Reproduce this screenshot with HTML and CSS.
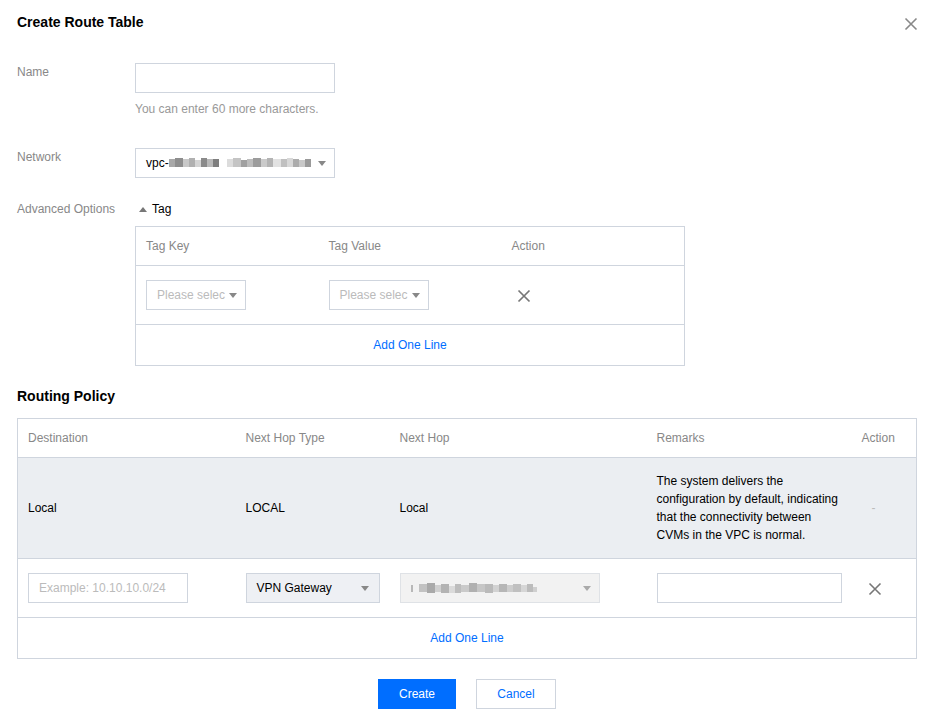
FILE: index.html
```html
<!DOCTYPE html>
<html>
<head>
<meta charset="utf-8">
<title>Create Route Table</title>
<link rel="stylesheet" href="styles.css">
</head>
<body>
<div class="dialog">
  <div class="dlg-head">
    <h3 class="dlg-title">Create Route Table</h3>
    <button class="close" aria-label="Close">
      <svg width="14" height="14" viewBox="0 0 14 14"><path d="M1.5 1.5 L12.5 12.5 M12.5 1.5 L1.5 12.5" stroke="#888" stroke-width="1.6" fill="none"/></svg>
    </button>
  </div>

  <div class="form">
    <div class="form-row">
      <div class="label">Name</div>
      <div class="control">
        <input class="input w200" type="text">
        <div class="help">You can enter 60 more characters.</div>
      </div>
    </div>

    <div class="form-row r-network">
      <div class="label">Network</div>
      <div class="control">
        <div class="select w200">
          <span class="sel-text">vpc-</span>
          <svg class="blur" width="148" height="12" viewBox="0 0 148 12">
            <rect x="0" y="2" width="6" height="8" fill="#a8a8a8"/>
            <rect x="6" y="1" width="8" height="9" fill="#8e8e8e"/>
            <rect x="14" y="2" width="6" height="8" fill="#c8c8c8"/>
            <rect x="20" y="1" width="6" height="9" fill="#b0b0b0"/>
            <rect x="26" y="3" width="6" height="7" fill="#d4d4d4"/>
            <rect x="32" y="1" width="6" height="9" fill="#8a8a8a"/>
            <rect x="38" y="2" width="6" height="8" fill="#b8b8b8"/>
            <rect x="44" y="2" width="6" height="8" fill="#7e7e7e"/>
            <rect x="58" y="2" width="6" height="8" fill="#dcdcdc"/>
            <rect x="64" y="1" width="8" height="9" fill="#c4c4c4"/>
            <rect x="72" y="3" width="6" height="7" fill="#a0a0a0"/>
            <rect x="78" y="2" width="6" height="8" fill="#bcbcbc"/>
            <rect x="84" y="1" width="8" height="9" fill="#9c9c9c"/>
            <rect x="92" y="2" width="6" height="8" fill="#cacaca"/>
            <rect x="98" y="1" width="6" height="9" fill="#b4b4b4"/>
            <rect x="104" y="2" width="8" height="8" fill="#e2e2e2"/>
            <rect x="112" y="2" width="6" height="8" fill="#c0c0c0"/>
            <rect x="118" y="1" width="6" height="9" fill="#d8d8d8"/>
            <rect x="124" y="2" width="6" height="8" fill="#acacac"/>
            <rect x="130" y="3" width="6" height="7" fill="#c8c8c8"/>
            <rect x="136" y="2" width="6" height="8" fill="#9a9a9a"/>
          </svg>
          <span class="caret"></span>
        </div>
      </div>
    </div>

    <div class="form-row r-adv">
      <div class="label">Advanced Options</div>
      <div class="control">
        <div class="toggle"><span class="tri-up"></span><span class="toggle-text">Tag</span></div>
        <table class="tbl tag-tbl">
          <colgroup><col class="c3"><col class="c3"><col></colgroup>
          <thead>
            <tr><th>Tag Key</th><th>Tag Value</th><th>Action</th></tr>
          </thead>
          <tbody>
            <tr class="row-input">
              <td><div class="select w100"><span class="placeholder">Please selec</span><span class="caret"></span></div></td>
              <td><div class="select w100"><span class="placeholder">Please selec</span><span class="caret"></span></div></td>
              <td><span class="del-x tag-del"><svg width="14" height="14" viewBox="0 0 14 14"><path d="M1.5 1.5 L12.5 12.5 M12.5 1.5 L1.5 12.5" stroke="#777" stroke-width="1.7" fill="none"/></svg></span></td>
            </tr>
            <tr class="row-add"><td colspan="3"><a class="link" href="#">Add One Line</a></td></tr>
          </tbody>
        </table>
      </div>
    </div>
  </div>

  <h4 class="section-title">Routing Policy</h4>

  <table class="tbl route-tbl">
    <colgroup>
      <col class="rc1"><col class="rc2"><col class="rc3"><col class="rc4"><col class="rc5">
    </colgroup>
    <thead>
      <tr><th>Destination</th><th>Next Hop Type</th><th>Next Hop</th><th>Remarks</th><th>Action</th></tr>
    </thead>
    <tbody>
      <tr class="row-local">
        <td>Local</td>
        <td>LOCAL</td>
        <td>Local</td>
        <td class="remarks">The system delivers the configuration by default, indicating that the connectivity between CVMs in the VPC is normal.</td>
        <td class="dash">-</td>
      </tr>
      <tr class="row-input">
        <td><input class="input w160 ph" type="text" placeholder="Example: 10.10.10.0/24"></td>
        <td><div class="select w134 sel-active"><span class="sel-text">VPN Gateway</span><span class="caret"></span></div></td>
        <td><div class="select w200 sel-disabled">
          <svg class="blur" width="160" height="14" viewBox="0 0 160 14">
            <rect x="0" y="4" width="2" height="7" fill="#b8b8b8"/>
            <rect x="8" y="3" width="8" height="8" fill="#c2c2c2"/>
            <rect x="16" y="2" width="8" height="10" fill="#a9a9a9"/>
            <rect x="24" y="4" width="6" height="7" fill="#cfcfcf"/>
            <rect x="30" y="3" width="8" height="9" fill="#b3b3b3"/>
            <rect x="38" y="5" width="6" height="7" fill="#dadada"/>
            <rect x="44" y="3" width="6" height="9" fill="#bdbdbd"/>
            <rect x="50" y="4" width="8" height="7" fill="#cacaca"/>
            <rect x="58" y="2" width="8" height="9" fill="#b0b0b0"/>
            <rect x="66" y="3" width="8" height="8" fill="#c6c6c6"/>
            <rect x="74" y="3" width="8" height="9" fill="#bababa"/>
            <rect x="82" y="4" width="6" height="7" fill="#d2d2d2"/>
            <rect x="88" y="3" width="8" height="8" fill="#b6b6b6"/>
            <rect x="96" y="4" width="6" height="7" fill="#cdcdcd"/>
            <rect x="102" y="3" width="8" height="8" fill="#c0c0c0"/>
            <rect x="110" y="4" width="6" height="7" fill="#d6d6d6"/>
            <rect x="116" y="3" width="6" height="8" fill="#bcbcbc"/>
            <rect x="122" y="6" width="4" height="5" fill="#cfcfcf"/>
          </svg>
          <span class="caret light"></span></div></td>
        <td><input class="input w185" type="text"></td>
        <td><span class="del-x route-del"><svg width="14" height="14" viewBox="0 0 14 14"><path d="M1.5 1.5 L12.5 12.5 M12.5 1.5 L1.5 12.5" stroke="#777" stroke-width="1.6" fill="none"/></svg></span></td>
      </tr>
      <tr class="row-add"><td colspan="5"><a class="link" href="#">Add One Line</a></td></tr>
    </tbody>
  </table>

  <div class="footer">
    <button class="btn btn-primary">Create</button>
    <button class="btn btn-default">Cancel</button>
  </div>
</div>
</body>
</html>
```

FILE: styles.css
```css
* { box-sizing: border-box; }
html, body { margin: 0; padding: 0; background: #fff; }
body {
  font-family: "Liberation Sans", Arial, sans-serif;
  font-size: 12px;
  color: #000;
  width: 937px;
  height: 724px;
  overflow: hidden;
}
.dialog { padding: 0 20px 0 17px; }
.dlg-head {
  display: flex;
  justify-content: space-between;
  align-items: center;
  height: 44px;
  width: 901px;
}
.dlg-title {
  margin: 0;
  font-size: 14px;
  font-weight: bold;
  line-height: 20px;
}
.close {
  border: 0;
  background: transparent;
  padding: 0;
  margin-top: 3px;
  width: 14px;
  height: 14px;
  display: flex;
}
.form { padding-top: 19px; }
.form-row { display: flex; }
.label {
  width: 118px;
  flex: none;
  color: #888;
  line-height: 18px;
}
.control { flex: 1; }
.input {
  display: block;
  height: 30px;
  border: 1px solid #cfd5de;
  background: #fff;
  font-family: inherit;
  font-size: 12px;
  padding: 0 10px;
  outline: none;
  margin: 0;
}
.input::placeholder { color: #bbb; }
.w200 { width: 200px; }
.w160 { width: 160px; }
.w185 { width: 185px; }
.w100 { width: 100px; }
.w134 { width: 134px; }
.help {
  color: #999;
  line-height: 18px;
  margin-top: 7px;
}
.r-network { margin-top: 30px; }
.r-adv { margin-top: 22px; }
.select {
  height: 30px;
  border: 1px solid #cfd5de;
  background: #fff;
  display: flex;
  align-items: center;
  padding: 0 10px;
  position: relative;
  overflow: hidden;
  white-space: nowrap;
}
.sel-text { color: #000; }
.placeholder { color: #bbb; flex: none; margin-right: 4px; }
.blur { flex: none; }
.caret {
  margin-left: auto;
  width: 0;
  height: 0;
  border-left: 4px solid transparent;
  border-right: 4px solid transparent;
  border-top: 5px solid #888;
  flex: none;
}
.caret.light { border-top-color: #aaa; }
.select.w200 .caret { margin-right: -2px; }
.w100.select { padding-right: 8px; }
.sel-active { background: #eef0f4; }
.sel-disabled { background: #f2f2f2; border-color: #dfe2e6; }
.toggle {
  display: flex;
  align-items: center;
  line-height: 18px;
  padding-left: 4px;
}
.tri-up {
  width: 0; height: 0;
  border-left: 4px solid transparent;
  border-right: 4px solid transparent;
  border-bottom: 5px solid #777;
  margin-right: 5px;
}
.tbl {
  border-collapse: collapse;
  table-layout: fixed;
  border: 1px solid #cfd5de;
}
.tbl th {
  text-align: left;
  font-weight: normal;
  color: #888;
  line-height: 18px;
  padding: 10px 10px 10px;
  border-bottom: 1px solid #cfd5de;
}
.tbl td {
  padding: 14px 10px;
  line-height: 18px;
  border-bottom: 1px solid #cfd5de;
  vertical-align: middle;
}
.tag-tbl { width: 550px; margin-top: 8px; }
.tag-tbl .c3 { width: 183px; }
.row-add td {
  text-align: center;
  padding: 11px 10px;
  border-bottom: 0;
}
.link { color: #006eff; text-decoration: none; }
.del-x { display: inline-flex; vertical-align: middle; }
.tag-del { margin-left: 5px; }
.section-title {
  margin: 20px 0 0;
  font-size: 14px;
  font-weight: bold;
  line-height: 20px;
}
.route-tbl { width: 900px; margin-top: 12px; }
.rc1 { width: 218px; }
.rc2 { width: 154px; }
.rc3 { width: 257px; }
.rc4 { width: 205px; }
.rc5 { width: 65px; }
.row-local td { background: #ebeef2; }
.remarks { padding-right: 12px !important; }
.dash { color: #bbb; padding-left: 20px !important; }
.route-del { margin-left: 6px; }
.footer {
  display: flex;
  justify-content: center;
  gap: 20px;
  margin-top: 20px;
  width: 900px;
}
.btn {
  height: 30px;
  font-family: inherit;
  font-size: 12px;
  padding: 0;
  cursor: pointer;
}
.btn-primary {
  width: 78px;
  background: #006eff;
  color: #fff;
  border: 0;
}
.btn-default {
  width: 80px;
  background: #fff;
  color: #006eff;
  border: 1px solid #cfd5de;
}
```
